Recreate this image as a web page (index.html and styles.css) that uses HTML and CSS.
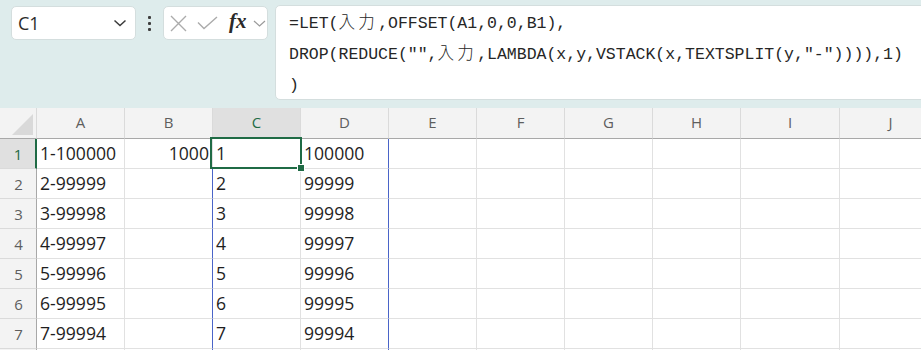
FILE: index.html
```html
<!DOCTYPE html>
<html lang="ja">
<head>
<meta charset="utf-8">
<link rel="stylesheet" href="styles.css">
</head>
<body>
<div class="toolbar">
  <div class="namebox">
    <span class="nb-text">C1</span>
    <svg class="nb-chev" width="14" height="8" viewBox="0 0 14 8"><polyline points="1.5,1.5 7,6.5 12.5,1.5" fill="none" stroke="#3b3b3b" stroke-width="1.5"/></svg>
  </div>
  <div class="dots"><span></span><span></span><span></span></div>
  <div class="fbtns">
    <svg class="ico-x" width="17" height="17" viewBox="0 0 17 17"><path d="M1 1L16 16M16 1L1 16" stroke="#ababab" stroke-width="1.4" fill="none"/></svg>
    <svg class="ico-ok" width="21" height="14" viewBox="0 0 21 14"><polyline points="1,6.5 7,12.5 20,1" fill="none" stroke="#ababab" stroke-width="1.4"/></svg>
    <span class="fx">fx</span>
    <svg class="ico-chev" width="13" height="7" viewBox="0 0 13 7"><polyline points="1,1 6.5,6 12,1" fill="none" stroke="#9a9a9a" stroke-width="1.2"/></svg>
  </div>
  <div class="formula">
    <div class="fline">=LET(<span class="cjk">入力</span>,OFFSET(A1,0,0,B1),</div>
    <div class="fline">DROP(REDUCE("",<span class="cjk">入力</span>,LAMBDA(x,y,VSTACK(x,TEXTSPLIT(y,"-")))),1)</div>
    <div class="fline">)</div>
  </div>
</div>

<div class="grid">
  <div class="h corner"><span class="tri"></span></div>
  <div class="h col">A</div>
  <div class="h col">B</div>
  <div class="h col sel">C</div>
  <div class="h col">D</div>
  <div class="h col">E</div>
  <div class="h col">F</div>
  <div class="h col">G</div>
  <div class="h col">H</div>
  <div class="h col">I</div>
  <div class="h col">J</div>

  <div class="h row sel">1</div>
  <div class="c">1-100000</div><div class="c r">1000</div><div class="c active">1</div><div class="c spill-r">100000</div><div class="c"></div><div class="c"></div><div class="c"></div><div class="c"></div><div class="c"></div><div class="c"></div>

  <div class="h row">2</div>
  <div class="c">2-99999</div><div class="c spill-l"></div><div class="c">2</div><div class="c spill-r">99999</div><div class="c"></div><div class="c"></div><div class="c"></div><div class="c"></div><div class="c"></div><div class="c"></div>

  <div class="h row">3</div>
  <div class="c">3-99998</div><div class="c spill-l"></div><div class="c">3</div><div class="c spill-r">99998</div><div class="c"></div><div class="c"></div><div class="c"></div><div class="c"></div><div class="c"></div><div class="c"></div>

  <div class="h row">4</div>
  <div class="c">4-99997</div><div class="c spill-l"></div><div class="c">4</div><div class="c spill-r">99997</div><div class="c"></div><div class="c"></div><div class="c"></div><div class="c"></div><div class="c"></div><div class="c"></div>

  <div class="h row">5</div>
  <div class="c">5-99996</div><div class="c spill-l"></div><div class="c">5</div><div class="c spill-r">99996</div><div class="c"></div><div class="c"></div><div class="c"></div><div class="c"></div><div class="c"></div><div class="c"></div>

  <div class="h row">6</div>
  <div class="c">6-99995</div><div class="c spill-l"></div><div class="c">6</div><div class="c spill-r">99995</div><div class="c"></div><div class="c"></div><div class="c"></div><div class="c"></div><div class="c"></div><div class="c"></div>

  <div class="h row">7</div>
  <div class="c">7-99994</div><div class="c spill-l"></div><div class="c">7</div><div class="c spill-r">99994</div><div class="c"></div><div class="c"></div><div class="c"></div><div class="c"></div><div class="c"></div><div class="c"></div>

  <div class="h row"></div>
  <div class="c"></div><div class="c spill-l"></div><div class="c"></div><div class="c spill-r"></div><div class="c"></div><div class="c"></div><div class="c"></div><div class="c"></div><div class="c"></div><div class="c"></div>
</div>
</body>
</html>
```

FILE: styles.css
```css
* { box-sizing: border-box; }
html, body { margin: 0; padding: 0; }
body {
  width: 921px;
  height: 350px;
  overflow: hidden;
  background: #ffffff;
  font-family: "Open Sans", "Liberation Sans", Arial, sans-serif;
  color: #222;
}

.toolbar {
  height: 108px;
  background: #deecec;
  display: flex;
  align-items: flex-start;
  padding: 6px 0 0 11px;
  overflow: hidden;
}

.namebox {
  flex: none;
  width: 125px;
  height: 34px;
  background: #fff;
  border-radius: 5px;
  border: 1px solid #d4dede;
  display: flex;
  align-items: center;
  justify-content: space-between;
  padding: 0 8px 0 6px;
}
.nb-text {
  font-family: "Open Sans", "Liberation Sans", sans-serif;
  font-size: 18px;
  color: #2b2b2b;
  margin-top: -1px;
}

.dots {
  flex: none;
  width: 27px;
  height: 34px;
  display: flex;
  flex-direction: column;
  align-items: center;
  justify-content: center;
  gap: 3px;
}
.dots span {
  width: 3px;
  height: 3px;
  background: #3e3e3e;
  border-radius: 1px;
}

.fbtns {
  flex: none;
  width: 105px;
  height: 34px;
  background: #fff;
  border-radius: 5px;
  border: 1px solid #d4dede;
  display: flex;
  align-items: center;
  padding: 0 0 0 6px;
}
.ico-x { flex: none; margin-right: 10px; }
.ico-ok { flex: none; margin-right: 11px; }
.fx {
  font-family: "Liberation Serif", "Times New Roman", serif;
  font-style: italic;
  font-weight: bold;
  font-size: 21px;
  color: #2a2a2a;
  margin-right: 6px;
  line-height: 1;
  margin-top: -3px;
}
.ico-chev { flex: none; margin-top: 1px; }

.formula {
  flex: none;
  margin-left: 7px;
  margin-top: -1px;
  width: 700px;
  height: 95px;
  background: #fff;
  border: 1px solid #d4dede;
  border-radius: 5px;
  padding: 2px 0 0 13px;
}
.fline {
  height: 31px;
  white-space: pre;
  font-family: "Liberation Mono", "DejaVu Sans Mono", monospace;
  font-size: 16.5px;
  line-height: 31px;
  color: #262626;
}
.fline:last-child { margin-top: 0; }
.cjk {
  font-family: "Noto Sans CJK JP", sans-serif;
  font-weight: 300;
  letter-spacing: 3.3px;
  line-height: 1;
}

.grid {
  display: grid;
  grid-template-columns: 37px 88px 88px 88px 88px 88px 88px 88px 88px 99px 102px;
  grid-template-rows: 31px repeat(8, 30px);
  width: 1000px;
}

.h {
  background: #f3f3f3;
  color: #5e5e5e;
  font-size: 15px;
  display: flex;
  align-items: center;
  justify-content: center;
}
.col {
  border-right: 1px solid #dadada;
  border-bottom: 1px solid #a8a8a8;
  padding-bottom: 2px;
}
.col.sel {
  background: #e0e0e0;
  color: #1f6b45;
  border-bottom: 1px solid #1f6b45;
}
.corner {
  border-right: 1px solid #dadada;
  border-bottom: 1px solid #a8a8a8;
  position: relative;
}
.corner .tri {
  position: absolute;
  right: 3px;
  bottom: 3px;
  width: 0;
  height: 0;
  border-left: 21px solid transparent;
  border-bottom: 21px solid #d9d9d9;
}
.row {
  border-right: 1px solid #a8a8a8;
  border-bottom: 1px solid #dadada;
  padding-left: 1px;
}
.row.sel {
  background: #e0e0e0;
  color: #1f6b45;
  border-right: 2px solid #1f6b45;
}

.c {
  border-right: 1px solid #e1e1e1;
  border-bottom: 1px solid #e1e1e1;
  font-size: 17.6px;
  display: flex;
  align-items: center;
  padding: 0 3px 1px 3px;
  color: #1e1e1e;
  white-space: nowrap;
  overflow: visible;
}
.c.r { justify-content: flex-end; padding-right: 3px; }
.c.spill-l { border-right: 1px solid #4a64c8; }
.c.spill-r { border-right: 1px solid #4a64c8; }

.c.active { position: relative; }
.c.active::after {
  content: "";
  position: absolute;
  left: -3px;
  top: -2px;
  right: -2px;
  bottom: -1px;
  border: 2px solid #1f6b45;
}
.c.active::before {
  content: "";
  position: absolute;
  right: -5px;
  bottom: -4px;
  width: 6px;
  height: 6px;
  background: #1f6b45;
  border: 1px solid #fff;
  z-index: 2;
}
```
